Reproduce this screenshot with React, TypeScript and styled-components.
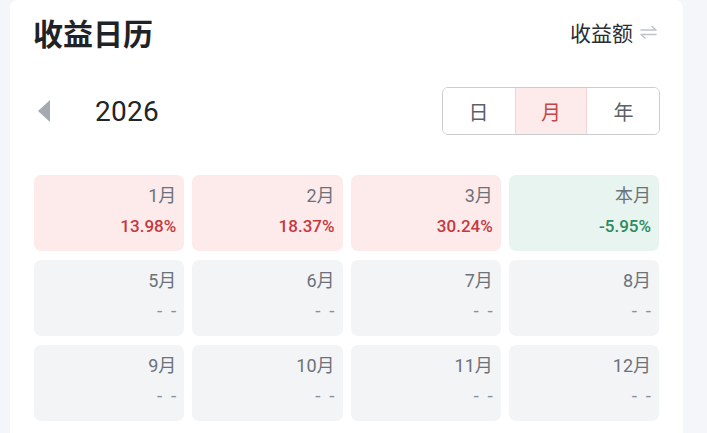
import styled, { createGlobalStyle } from 'styled-components';

const GlobalStyle = createGlobalStyle`
  html, body {
    margin: 0;
    padding: 0;
    background: #f5f6fa;
    font-family: Roboto, "Noto Sans CJK SC", "Noto Sans", sans-serif;
  }
`;

const Page = styled.div`
  width: 707px;
  height: 433px;
  overflow: hidden;
  padding: 0 24px 0 10px;
  box-sizing: border-box;
`;

const Card = styled.div`
  background: #ffffff;
  border-radius: 8px 8px 0 0;
  height: 100%;
  padding: 14px 24px 0 24px;
  box-sizing: border-box;
`;

const Header = styled.div`
  display: flex;
  align-items: center;
  justify-content: space-between;
  height: 36px;
`;

const Title = styled.h1`
  margin: 0 0 0 -1px;
  font-family: "Noto Sans CJK SC", sans-serif;
  font-size: 30px;
  font-weight: 700;
  color: #1f2226;
  line-height: 36px;
`;

const ModeSwitch = styled.div`
  display: flex;
  align-items: center;
  gap: 6px;
  font-family: "Noto Sans CJK SC", sans-serif;
  font-size: 21px;
  color: #2a2d31;
  margin-right: 1px;
`;

const YearRow = styled.div`
  display: flex;
  align-items: center;
  justify-content: space-between;
  margin-top: 37px;
  height: 48px;
`;

const YearPicker = styled.div`
  display: flex;
  align-items: center;
  gap: 45px;
`;

const Arrow = styled.div`
  width: 0;
  height: 0;
  margin-left: 4px;
  border-top: 11px solid transparent;
  border-bottom: 11px solid transparent;
  border-right: 12px solid #a3aab2;
`;

const Year = styled.span`
  font-size: 28px;
  color: #222427;
  letter-spacing: 0.3px;
`;

const Segments = styled.div`
  display: flex;
  height: 48px;
  border: 1.5px solid #c9cdd2;
  border-radius: 6px;
  overflow: hidden;
  box-sizing: border-box;
  margin-right: -1px;
`;

const Segment = styled.div<{ $active?: boolean }>`
  width: 72px;
  display: flex;
  align-items: center;
  justify-content: center;
  box-sizing: border-box;
  font-family: "Noto Sans CJK SC", sans-serif;
  font-size: 20px;
  color: ${(p) => (p.$active ? '#c2474b' : '#5a6169')};
  background: ${(p) => (p.$active ? '#fdeaea' : '#ffffff')};
  border-left: 1.5px solid ${(p) => (p.$active ? '#f3d3d3' : 'transparent')};
  border-right: 1.5px solid ${(p) => (p.$active ? '#f3d3d3' : 'transparent')};
  &:first-child {
    border-left: none;
  }
  &:last-child {
    border-right: none;
  }
`;

const Grid = styled.div`
  display: grid;
  grid-template-columns: repeat(4, 1fr);
  gap: 9px 8px;
  margin-top: 40px;
`;

type Tone = 'up' | 'down' | 'none';

const Tile = styled.div<{ $tone: Tone }>`
  height: 76px;
  border-radius: 7px;
  padding: 10px 8px 0;
  box-sizing: border-box;
  display: flex;
  flex-direction: column;
  align-items: flex-end;
  background: ${(p) =>
    p.$tone === 'up' ? '#fdeaea' : p.$tone === 'down' ? '#e7f4ef' : '#f3f4f6'};
`;

const MonthLabel = styled.span`
  font-size: 18px;
  line-height: 22px;
  color: #6c727a;
`;

const Value = styled.span<{ $tone: Tone }>`
  margin-top: 7px;
  font-size: ${(p) => (p.$tone === 'none' ? '19px' : '17px')};
  line-height: 24px;
  font-weight: ${(p) => (p.$tone === 'none' ? 400 : 500)};
  color: ${(p) =>
    p.$tone === 'up' ? '#c4393f' : p.$tone === 'down' ? '#2b8a5e' : '#8a9098'};
  letter-spacing: ${(p) => (p.$tone === 'none' ? '2px' : '0')};
  margin-right: ${(p) => (p.$tone === 'none' ? '-2px' : '0')};
`;

const months: { label: string; value: string; tone: Tone }[] = [
  { label: '1月', value: '13.98%', tone: 'up' },
  { label: '2月', value: '18.37%', tone: 'up' },
  { label: '3月', value: '30.24%', tone: 'up' },
  { label: '本月', value: '-5.95%', tone: 'down' },
  { label: '5月', value: '- -', tone: 'none' },
  { label: '6月', value: '- -', tone: 'none' },
  { label: '7月', value: '- -', tone: 'none' },
  { label: '8月', value: '- -', tone: 'none' },
  { label: '9月', value: '- -', tone: 'none' },
  { label: '10月', value: '- -', tone: 'none' },
  { label: '11月', value: '- -', tone: 'none' },
  { label: '12月', value: '- -', tone: 'none' },
];

const SwapIcon = () => (
  <svg width="19" height="14" viewBox="0 0 19 14" fill="none" stroke="#bfc4ca" strokeWidth="1.6" strokeLinecap="round" strokeLinejoin="round">
    <path d="M2 5 H17 L13 1.5" />
    <path d="M17 9.5 H2 L6 13" />
  </svg>
);

const App = () => {
  return (
    <Page>
      <GlobalStyle />
      <Card>
        <Header>
          <Title>收益日历</Title>
          <ModeSwitch>
            收益额
            <SwapIcon />
          </ModeSwitch>
        </Header>
        <YearRow>
          <YearPicker>
            <Arrow />
            <Year>2026</Year>
          </YearPicker>
          <Segments>
            <Segment>日</Segment>
            <Segment $active>月</Segment>
            <Segment>年</Segment>
          </Segments>
        </YearRow>
        <Grid>
          {months.map((m) => (
            <Tile key={m.label} $tone={m.tone}>
              <MonthLabel>{m.label}</MonthLabel>
              <Value $tone={m.tone}>{m.value}</Value>
            </Tile>
          ))}
        </Grid>
      </Card>
    </Page>
  );
};

export default App;
